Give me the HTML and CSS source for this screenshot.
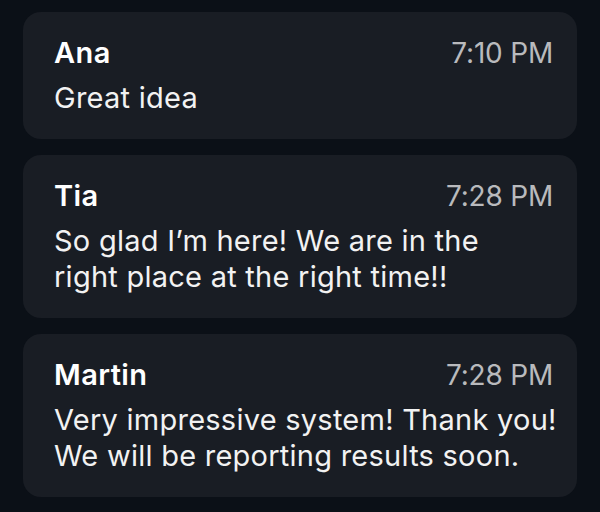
FILE: index.html
```html
<!DOCTYPE html>
<html>
<head>
<meta charset="utf-8">
<link rel="stylesheet" href="styles.css">
</head>
<body>
<div class="list">
  <div class="card">
    <div class="head"><span class="name">Ana</span><span class="time">7:10 PM</span></div>
    <div class="msg">Great idea</div>
  </div>
  <div class="card">
    <div class="head"><span class="name">Tia</span><span class="time">7:28 PM</span></div>
    <div class="msg">So glad I’m here! We are in the<br>right place at the right time!!</div>
  </div>
  <div class="card">
    <div class="head"><span class="name">Martin</span><span class="time">7:28 PM</span></div>
    <div class="msg">Very impressive system! Thank you!<br>We will be reporting results soon.</div>
  </div>
</div>
</body>
</html>
```
FILE: styles.css
```css
html, body {
  margin: 0;
  padding: 0;
  background: #0b1017;
  height: 100%;
}
body {
  font-family: Inter, "Noto Sans", sans-serif;
  color: #f4f4f4;
}
.list {
  display: flex;
  flex-direction: column;
  gap: 16px;
  padding: 12px 23px 0 23px;
}
.card {
  background: #191d24;
  border-radius: 18px;
  padding: 23px 24px 23px 31px;
  display: flex;
  flex-direction: column;
  gap: 9px;
}
.head {
  display: flex;
  justify-content: space-between;
  align-items: baseline;
  line-height: 36px;
}
.name {
  font-size: 29px;
  font-weight: 600;
  letter-spacing: 0.4px;
  color: #ffffff;
}
.time {
  font-size: 28px;
  font-weight: 400;
  letter-spacing: -0.2px;
  color: #b9babd;
}
.msg {
  font-size: 29px;
  line-height: 36px;
  letter-spacing: 0.25px;
  color: #f2f2f2;
  white-space: nowrap;
}
```
